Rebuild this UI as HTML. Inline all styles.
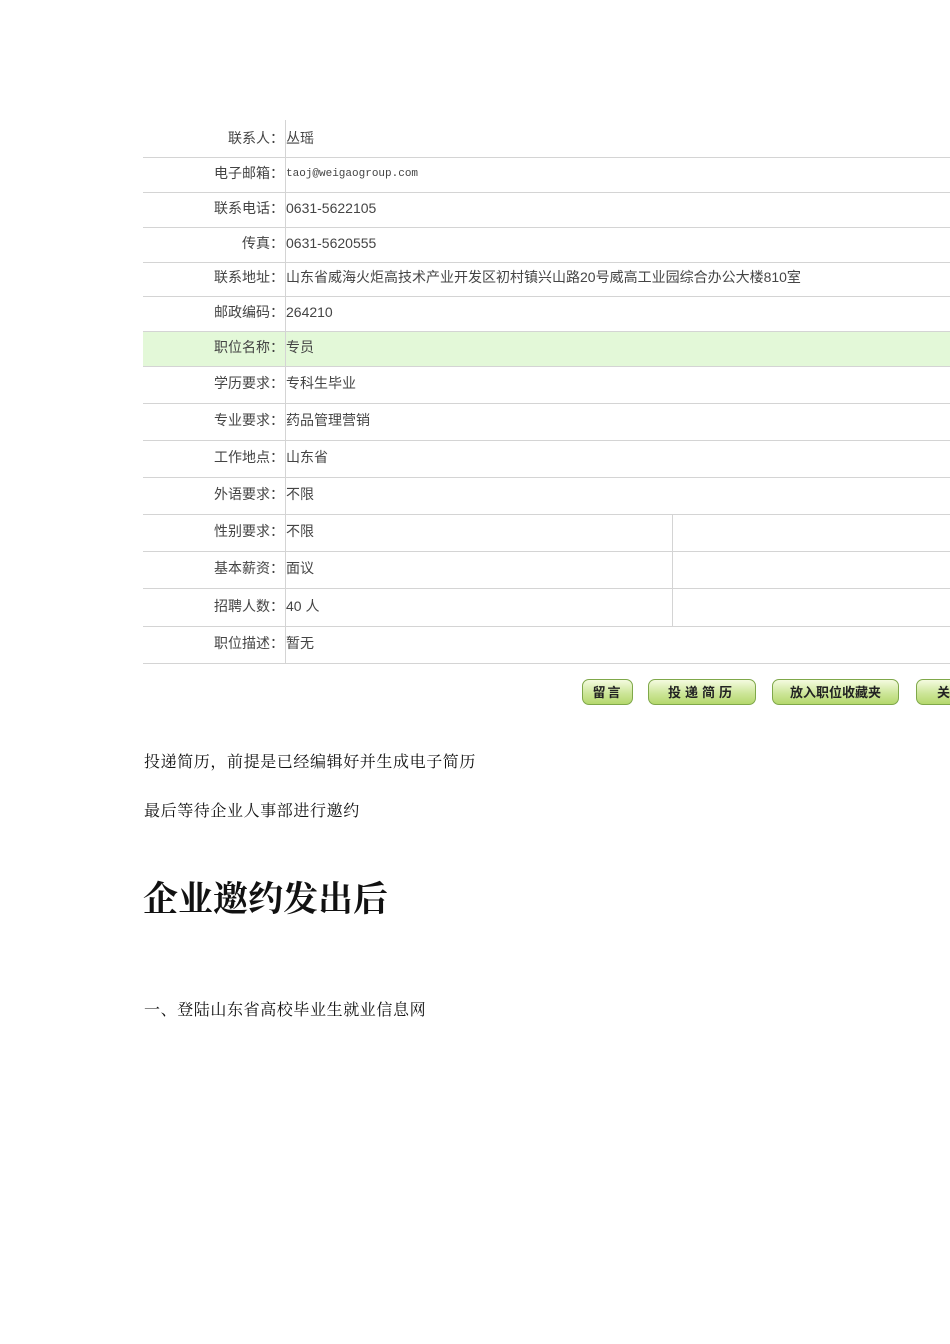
<!DOCTYPE html>
<html><head><meta charset="utf-8"><style>
body{margin:0;width:950px;height:1344px;background:#fff;position:relative;overflow:hidden;font-family:"Liberation Sans","Noto Sans CJK SC",sans-serif}
.h{position:absolute;left:143px;right:0;height:1px;background:#d4d4d4}
.v{position:absolute;width:1px;background:#d4d4d4}
.l{position:absolute;left:143px;width:141px;text-align:right;font-size:14px;color:#444;line-height:16px;white-space:nowrap}
.t{position:absolute;left:286px;font-size:14px;color:#444;line-height:16px;white-space:nowrap}
.b{position:absolute;height:26px;border:1px solid #7fa84a;border-radius:7px;background:linear-gradient(#f4fbe0,#cde69a 55%,#b5d86d);font-size:13px;font-weight:bold;color:#222;text-align:center;line-height:26px;letter-spacing:2px;box-sizing:border-box}
.p{position:absolute;left:144px;font-family:"Liberation Serif","Noto Serif CJK SC",serif;font-size:16px;letter-spacing:0.6px;color:#111;white-space:nowrap}
</style></head><body>
<div style="position:absolute;left:143px;right:0;top:331px;height:35px;background:#e3f8d8"></div>
<div class="v" style="left:285px;top:120px;height:543px"></div>
<div class="v" style="left:672px;top:514px;height:112px"></div>
<div class="h" style="top:157px"></div><div class="h" style="top:192px"></div><div class="h" style="top:227px"></div><div class="h" style="top:262px"></div><div class="h" style="top:296px"></div><div class="h" style="top:331px"></div><div class="h" style="top:366px"></div><div class="h" style="top:403px"></div><div class="h" style="top:440px"></div><div class="h" style="top:477px"></div><div class="h" style="top:514px"></div><div class="h" style="top:551px"></div><div class="h" style="top:588px"></div><div class="h" style="top:626px"></div><div class="h" style="top:663px"></div>
<div class="l" style="top:130px">联系人：</div><div class="t" style="top:130px">丛瑶</div>
<div class="l" style="top:165px">电子邮箱：</div><div class="t" style="top:166px;font-family:'Liberation Mono',monospace;font-size:11px">taoj@weigaogroup.com</div>
<div class="l" style="top:200px">联系电话：</div><div class="t" style="top:200px">0631-5622105</div>
<div class="l" style="top:235px">传真：</div><div class="t" style="top:235px">0631-5620555</div>
<div class="l" style="top:269px">联系地址：</div><div class="t" style="top:269px">山东省威海火炬高技术产业开发区初村镇兴山路20号威高工业园综合办公大楼810室</div>
<div class="l" style="top:304px">邮政编码：</div><div class="t" style="top:304px">264210</div>
<div class="l" style="top:339px">职位名称：</div><div class="t" style="top:339px">专员</div>
<div class="l" style="top:375px">学历要求：</div><div class="t" style="top:375px">专科生毕业</div>
<div class="l" style="top:412px">专业要求：</div><div class="t" style="top:412px">药品管理营销</div>
<div class="l" style="top:449px">工作地点：</div><div class="t" style="top:449px">山东省</div>
<div class="l" style="top:486px">外语要求：</div><div class="t" style="top:486px">不限</div>
<div class="l" style="top:523px">性别要求：</div><div class="t" style="top:523px">不限</div>
<div class="l" style="top:560px">基本薪资：</div><div class="t" style="top:560px">面议</div>
<div class="l" style="top:598px">招聘人数：</div><div class="t" style="top:598px">40 人</div>
<div class="l" style="top:635px">职位描述：</div><div class="t" style="top:635px">暂无</div>
<div class="b" style="left:582px;top:679px;width:51px">留言</div>
<div class="b" style="left:648px;top:679px;width:108px;letter-spacing:4px">投递简历</div>
<div class="b" style="left:772px;top:679px;width:127px;letter-spacing:0">放入职位收藏夹</div>
<div class="b" style="left:916px;top:679px;width:60px;text-align:left;padding-left:20px">关</div>
<div class="p" style="top:749px">投递简历，前提是已经编辑好并生成电子简历</div>
<div class="p" style="top:798px">最后等待企业人事部进行邀约</div>
<div class="p" style="top:872px;font-size:35px;font-weight:bold;left:143px;letter-spacing:0">企业邀约发出后</div>
<div class="p" style="top:997px">一、登陆山东省高校毕业生就业信息网</div>
</body></html>
